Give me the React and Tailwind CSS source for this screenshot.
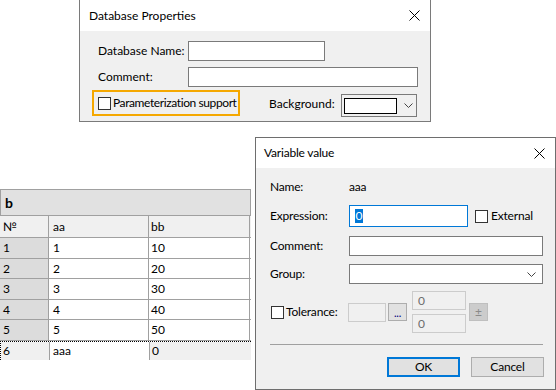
import React from "react";

const font = { fontFamily: 'Lato, "Noto Sans", sans-serif' };

const CloseX = () => (
  <svg width="11" height="11" viewBox="0 0 11 11" className="block">
    <path d="M0.5 0.5 L10.5 10.5 M10.5 0.5 L0.5 10.5" stroke="#000" strokeWidth="1" fill="none" />
  </svg>
);

const Chevron = () => (
  <svg width="9" height="5" viewBox="0 0 9 5" className="block">
    <path d="M0.5 0.5 L4.5 4.5 L8.5 0.5" stroke="#444" strokeWidth="1" fill="none" />
  </svg>
);

const Check = () => <div className="w-[13px] h-[13px] border border-[#333] bg-white shrink-0" />;

const rows = [
  { n: "1", a: "1", b: "10", h: "h-[21px]" },
  { n: "2", a: "2", b: "20", h: "h-[20px]" },
  { n: "3", a: "3", b: "30", h: "h-[21px]" },
  { n: "4", a: "4", b: "40", h: "h-[20px]" },
  { n: "5", a: "5", b: "50", h: "h-[21px]" },
];

function DatabaseProperties() {
  return (
    <div className="absolute left-[79px] top-[-1px] w-[352px] h-[123px] border border-[#7a7a7a] bg-[#f0f0f0] flex flex-col">
      <div className="h-[31px] bg-white flex items-center justify-between pl-[9px] pr-[10px] shrink-0">
        <span className="text-[12px] text-black">Database Properties</span>
        <CloseX />
      </div>
      <div className="flex items-center mt-[10px] h-[20px]">
        <span className="pl-[18px] w-[108px] text-[12px] whitespace-nowrap">Database Name:</span>
        <div className="w-[137px] h-[20px] border border-[#7a7a7a] bg-white" />
      </div>
      <div className="flex items-center mt-[6px] h-[20px]">
        <span className="pl-[18px] w-[108px] text-[12px]">Comment:</span>
        <div className="w-[230px] h-[20px] border border-[#7a7a7a] bg-white" />
      </div>
      <div className="flex items-start mt-[3px]">
        <div className="ml-[12px] w-[148px] h-[26px] border-2 border-[#f5a800] flex items-center pl-[4px] gap-[2px]">
          <Check />
          <span className="text-[12px] whitespace-nowrap tracking-[-0.4px]">Parameterization support</span>
        </div>
        <span className="ml-[29px] mt-[5px] w-[72px] text-[12px] whitespace-nowrap">Background:</span>
        <div className="mt-[4px] w-[76px] h-[23px] border border-[#7a7a7a] bg-[#f0f0f0] flex items-center pl-[2px]">
          <div className="w-[53px] h-[16px] border border-black bg-white" />
          <div className="ml-[7px]">
            <Chevron />
          </div>
        </div>
      </div>
    </div>
  );
}

function Table() {
  return (
    <div className="absolute left-0 top-[189px] w-[251px] text-[12px]">
      <div className="h-[27px] bg-[#e1e1e1] border border-[#a0a0a0] flex items-center pl-[4px] font-bold text-[14px]">
        b
      </div>
      <div className="grid grid-cols-[49px_100px_101px] h-[22px] border-b border-[#a0a0a0] bg-[#f0f0f0]">
        <div className="border-r border-[#a0a0a0] pl-[3px] flex items-center">№</div>
        <div className="border-r border-[#a0a0a0] pl-[4px] flex items-center">aa</div>
        <div className="border-r border-[#a0a0a0] pl-[2px] flex items-center">bb</div>
      </div>
      {rows.map((r) => (
        <div key={r.n} className={`grid grid-cols-[49px_100px_101px] ${r.h} border-b border-[#a0a0a0]`}>
          <div className="bg-[#dcdcdc] border-r border-[#a0a0a0] pl-[3px] flex items-center">{r.n}</div>
          <div className="bg-white border-r border-[#a0a0a0] pl-[4px] flex items-center">{r.a}</div>
          <div className="bg-white border-r border-[#a0a0a0] pl-[2px] flex items-center">{r.b}</div>
        </div>
      ))}
      <div className="grid grid-cols-[49px_100px_101px] h-[19px] border border-dotted border-black">
        <div className="bg-[#f0f0f0] border-r border-[#a0a0a0] pl-[2px] flex items-center">6</div>
        <div className="bg-white border-r border-[#a0a0a0] pl-[3px] flex items-center">aaa</div>
        <div className="bg-[#f0f0f0] pl-[2px] flex items-center">0</div>
      </div>
    </div>
  );
}

function VariableValue() {
  return (
    <div className="absolute left-[255px] top-[137px] w-[301px] h-[253px] border border-[#6e6e6e] bg-[#f0f0f0] flex flex-col text-[12px] tracking-[-0.2px]">
      <div className="h-[30px] bg-white flex items-center justify-between pl-[8px] pr-[10px] shrink-0">
        <span>Variable value</span>
        <CloseX />
      </div>
      <div className="flex items-center mt-[9px] h-[20px]">
        <span className="pl-[14px] w-[93px]">Name:</span>
        <span>aaa</span>
      </div>
      <div className="flex items-center mt-[8px] h-[22px]">
        <span className="pl-[14px] w-[93px]">Expression:</span>
        <div className="w-[119px] h-[22px] border border-[#0078d7] bg-white flex items-center pl-[5px]">
          <span className="bg-[#0078d7] text-white leading-[14px] px-[0.5px]">0</span>
        </div>
        <div className="ml-[7px] flex items-center gap-[3px]">
          <Check />
          <span>External</span>
        </div>
      </div>
      <div className="flex items-center mt-[9px] h-[20px]">
        <span className="pl-[14px] w-[93px]">Comment:</span>
        <div className="w-[194px] h-[20px] border border-[#7a7a7a] bg-white" />
      </div>
      <div className="flex items-center mt-[8px] h-[20px]">
        <span className="pl-[14px] w-[93px]">Group:</span>
        <div className="w-[194px] h-[20px] border border-[#7a7a7a] bg-white flex items-center justify-end pr-[6px]">
          <Chevron />
        </div>
      </div>
      <div className="flex items-center mt-[7px] h-[42px]">
        <div className="pl-[15px] w-[92px] flex items-center gap-[2px]">
          <Check />
          <span className="whitespace-nowrap">Tolerance:</span>
        </div>
        <div className="w-[38px] h-[19px] border border-[#cccccc] bg-[#f0f0f0]" />
        <div className="ml-[2px] w-[19px] h-[18px] border border-[#adadad] bg-[#e1e1e1] flex items-end justify-center text-[#000080] leading-[14px] text-[11px]">
          ...
        </div>
        <div className="ml-[5px] flex flex-col gap-[4px]">
          <div className="w-[54px] h-[19px] border border-[#cccccc] bg-[#f0f0f0] text-[#6d6d6d] pl-[5px] flex items-center">0</div>
          <div className="w-[54px] h-[19px] border border-[#cccccc] bg-[#f0f0f0] text-[#6d6d6d] pl-[5px] flex items-center">0</div>
        </div>
        <div className="ml-[3px] w-[19px] h-[18px] border border-[#bfbfbf] bg-[#cccccc] text-[#8a8a8a] flex items-center justify-center">
          ±
        </div>
      </div>
      <div className="mt-[11px] ml-[14px] w-[273px] h-px bg-[#a0a0a0]" />
      <div className="flex justify-end gap-[11px] mt-[12px] pr-[11px]">
        <div className="w-[73px] h-[20px] border-2 border-[#0078d7] bg-[#e1e1e1] flex items-center justify-center">OK</div>
        <div className="w-[73px] h-[20px] border border-[#adadad] bg-[#e1e1e1] flex items-center justify-center">Cancel</div>
      </div>
    </div>
  );
}

export default function App() {
  return (
    <div className="relative w-[556px] h-[390px] bg-white overflow-hidden text-black" style={font}>
      <DatabaseProperties />
      <Table />
      <VariableValue />
    </div>
  );
}
